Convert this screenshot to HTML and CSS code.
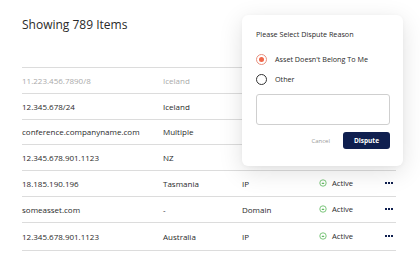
FILE: index.html
```html
<!DOCTYPE html>
<html lang="en">
<head>
  <meta charset="UTF-8">
  <title>Assets</title>
  <link rel="stylesheet" href="styles.css">
</head>
<body>
<div class="page">
  <h1 class="title">Showing 789 Items</h1>

  <div class="assets">
    <div class="row muted">
      <span>11.223.456.7890/8</span><span>Iceland</span><span></span><span></span><span></span>
    </div>
    <div class="row">
      <span>12.345.678/24</span><span>Iceland</span><span></span><span></span><span></span>
    </div>
    <div class="row">
      <span>conference.companyname.com</span><span>Multiple</span><span></span><span></span><span></span>
    </div>
    <div class="row">
      <span>12.345.678.901.1123</span><span>NZ</span><span></span><span></span><span></span>
    </div>
    <div class="row">
      <span>18.185.190.196</span><span>Tasmania</span><span>IP</span>
      <span class="status"><svg viewBox="0 0 10 10"><circle cx="5" cy="5" r="4" /><path d="M3 6.2 L5 4 L7 6.2 Z" /></svg>Active</span>
      <span class="more"><i></i><i></i><i></i></span>
    </div>
    <div class="row">
      <span>someasset.com</span><span>-</span><span>Domain</span>
      <span class="status"><svg viewBox="0 0 10 10"><circle cx="5" cy="5" r="4" /><path d="M3 6.2 L5 4 L7 6.2 Z" /></svg>Active</span>
      <span class="more"><i></i><i></i><i></i></span>
    </div>
    <div class="row last">
      <span>12.345.678.901.1123</span><span>Australia</span><span>IP</span>
      <span class="status"><svg viewBox="0 0 10 10"><circle cx="5" cy="5" r="4" /><path d="M3 6.2 L5 4 L7 6.2 Z" /></svg>Active</span>
      <span class="more"><i></i><i></i><i></i></span>
    </div>
  </div>

  <div class="dispute">
    <p class="dispute-title">Please Select Dispute Reason</p>
    <label class="choice"><span class="radio checked"></span>Asset Doesn't Belong To Me</label>
    <label class="choice"><span class="radio"></span>Other</label>
    <div class="reason"></div>
    <div class="actions">
      <span class="cancel">Cancel</span>
      <button class="submit">Dispute</button>
    </div>
  </div>
</div>
</body>
</html>
```

FILE: styles.css
```css
html {
  --ink: #2a2a2a;
  --muted: #aaa;
  --line: #dcdcdc;
  --navy: #0f1f4f;
  --green: #5cb85c;
  --orange: #f0674a;
  --font: 'Open Sans', 'Liberation Sans', sans-serif;
}

body {
  margin: 0;
  background: #fff;
  font-family: var(--font);
  color: var(--ink);
}

.page {
  position: relative;
  width: 420px;
  height: 280px;
  padding: 16px 24px 0 22px;
  box-sizing: border-box;
}

.title {
  margin: 0;
  font-size: 12px;
  font-weight: 400;
  line-height: 18px;
}

.assets {
  margin-top: 33px;
}

.row {
  display: grid;
  grid-template-columns: 141px 79px 77px 52px 25px;
  align-items: center;
  height: 25.75px;
  box-sizing: border-box;
  border-top: 1px solid var(--line);
  font-size: 8px;
}

.row.last {
  height: 29px;
  border-bottom: 1px solid var(--line);
}

.row.muted {
  color: var(--muted);
}

.status {
  display: flex;
  align-items: center;
  gap: 5px;
  font-size: 7.6px;
}

.status svg {
  width: 8px;
  height: 8px;
}

.status circle {
  fill: none;
  stroke: var(--green);
  stroke-width: 1;
}

.status path {
  fill: var(--green);
}

.more {
  display: flex;
  justify-content: flex-end;
  gap: 1px;
  padding-right: 3px;
}

.more i {
  width: 2px;
  height: 2px;
  background: var(--navy);
}

.dispute {
  position: absolute;
  left: 242px;
  top: 15px;
  width: 161px;
  height: 151px;
  padding: 14px 13px 0 14px;
  box-sizing: border-box;
  background: #fff;
  border-radius: 6px;
  box-shadow: 0 6px 24px rgba(0, 0, 0, 0.12), 0 1px 4px rgba(0, 0, 0, 0.04);
}

.dispute-title {
  margin: 0 0 10px;
  font-size: 7.2px;
  line-height: 10px;
}

.choice {
  display: flex;
  align-items: center;
  gap: 8px;
  height: 20px;
  font-size: 7.2px;
}

.radio {
  width: 9px;
  height: 9px;
  border: 1px solid #333;
  border-radius: 50%;
  display: flex;
  align-items: center;
  justify-content: center;
}

.radio.checked {
  border-color: #e8907e;
}

.radio.checked::after {
  content: "";
  width: 5px;
  height: 5px;
  border-radius: 50%;
  background: var(--orange);
}

.reason {
  margin-top: 5px;
  height: 29px;
  border: 1px solid #cfcfcf;
  border-radius: 3px;
}

.actions {
  display: flex;
  justify-content: flex-end;
  align-items: center;
  gap: 13px;
  margin-top: 7px;
}

.cancel {
  color: #9a9a9a;
  font-size: 6px;
}

.submit {
  width: 47px;
  height: 17px;
  border: none;
  border-radius: 3px;
  background: var(--navy);
  color: #fff;
  font-family: var(--font);
  font-size: 6.5px;
  font-weight: 700;
  padding: 0;
}
```
